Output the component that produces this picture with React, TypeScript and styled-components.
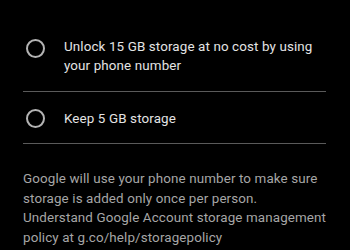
import React from "react";
import styled, { createGlobalStyle } from "styled-components";

const Global = createGlobalStyle`
  html, body { margin: 0; padding: 0; background: #000; }
  body { font-family: Roboto, "Noto Sans", Arial, sans-serif; -webkit-font-smoothing: antialiased; }
`;

const Page = styled.div`
  width: 350px;
  height: 250px;
  overflow: hidden;
  background: #000;
  box-sizing: border-box;
  padding: 19.5px 24px 0 23px;
`;

const Option = styled.label`
  display: flex;
  align-items: flex-start;
  gap: 19px;
  padding: 17px 0 15px 3px;
  border-bottom: 1px solid #5a5a5a;
`;

const Radio = styled.span<{ $offset: number }>`
  flex: none;
  box-sizing: border-box;
  width: 19px;
  height: 19px;
  border: 2px solid #b4b4b4;
  border-radius: 50%;
  margin-top: ${(p) => p.$offset}px;
`;

const OptionText = styled.span`
  font-size: 13.4px;
  line-height: 19.5px;
  color: #e4e4e4;
  letter-spacing: 0.12px;
  white-space: nowrap;
`;

const Note = styled.p`
  margin: 25px 0 0 0;
  font-size: 13.4px;
  line-height: 19.5px;
  color: #a6a6a6;
  letter-spacing: 0.12px;
  white-space: nowrap;
`;

export default function App() {
  return (
    <>
      <Global />
      <Page>
        <Option>
          <Radio $offset={2} />
          <OptionText>
            Unlock 15 GB storage at no cost by using
            <br />
            your phone number
          </OptionText>
        </Option>
        <Option>
          <Radio $offset={0.5} />
          <OptionText>Keep 5 GB storage</OptionText>
        </Option>
        <Note>
          Google will use your phone number to make sure
          <br />
          storage is added only once per person.
          <br />
          Understand Google Account storage management
          <br />
          policy at g.co/help/storagepolicy
        </Note>
      </Page>
    </>
  );
}
